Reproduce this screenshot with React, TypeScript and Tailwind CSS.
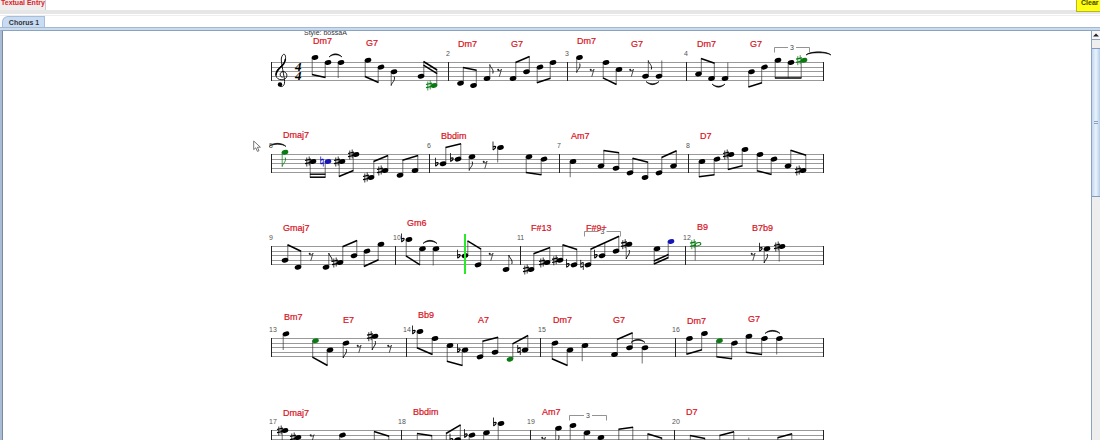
type Accidental = "sharp" | "flat" | "natural";
type Note = [x: number, y: number, accidental?: Accidental | null, color?: string];

interface Group {
  notes: Note[];
  dir: "up" | "down";
  // Height of the stem ends at the first and the last note.
  ends: [number, number];
  kind?: "beam" | "double" | "flag" | "half";
}

interface System {
  bars: number[];
  numbers: [number, number][];
  chords: [number, number, string][];
  groups: Group[];
  rests: [number, number][];
  // x1, y1, x2, y2, bulge
  ties: [number, number, number, number, number][];
  brackets: [number, number][];
  playhead?: number;
}

const GREEN = "#0a7a12";
const BLUE = "#1414b8";
const LINES = [0, 5, 9, 14, 18];

const beam = (dir: "up" | "down", a: number, b: number, ...notes: Note[]): Group => ({ notes, dir, ends: [a, b], kind: "beam" });
const pair16 = (dir: "up" | "down", a: number, b: number, ...notes: Note[]): Group => ({ notes, dir, ends: [a, b], kind: "double" });
const flag = (dir: "up" | "down", end: number, note: Note): Group => ({ notes: [note], dir, ends: [end, end], kind: "flag" });
const quarter = (dir: "up" | "down", end: number, note: Note): Group => ({ notes: [note], dir, ends: [end, end] });

const systems: System[] = [
  {
    bars: [448.5, 567.5, 686.5],
    numbers: [[446, 2], [565, 3], [684, 4]],
    chords: [[313, -18, "Dm7"], [366, -16, "G7"], [458, -15, "Dm7"], [511, -15, "G7"], [577, -18, "Dm7"], [631, -15, "G7"], [697, -15, "Dm7"], [750, -15, "G7"]],
    groups: [
      beam("down", 12, 15, [315, -5], [328, 0]),
      quarter("down", 15.5, [341, 0]),
      beam("down", 14, 20, [368, -2.3], [381, 4.6]),
      flag("down", 23, [394, 9.2]),
      pair16("up", -1, 7.5, [421, 13.8], [434, 23, "sharp", GREEN]),
      beam("up", 5, 7.7, [460.5, 20.7], [473.5, 23]),
      flag("up", 2, [487, 16]),
      beam("up", 0, -6, [513, 16], [526.5, 9.2]),
      beam("down", 20.3, 15.7, [540, 4.6], [553, 0]),
      flag("down", 10, [579.5, -5]),
      beam("down", 15.3, 22, [606, 0], [619, 7]),
      flag("up", -2, [645.5, 13.8]),
      quarter("up", -2, [659, 13.8]),
      beam("up", -4, 0.7, [698.5, 11.5], [711.5, 16]),
      quarter("up", 0, [725, 16]),
      beam("down", 24.5, 20.3, [751.5, 9.2], [764.5, 4.6]),
      beam("down", 15.5, 15.5, [778, -2.3], [791, 0], [804, -2.3, "sharp", GREEN]),
    ],
    rests: [[499.5, 9.5], [592, 9.5], [631.5, 9.5]],
    ties: [[329, -5.5, 342, -5.5, -3], [646, 19, 659, 19, 3], [712, 21.5, 725, 21.5, 3], [806, -7.5, 831, -7.5, -3]],
    brackets: [[774.5, 809.5]],
  },
  {
    bars: [429.5, 559.5, 688.5],
    numbers: [[269, 5], [427, 6], [557, 7], [686, 8]],
    chords: [[283, -16, "Dmaj7"], [441, -15, "Bbdim"], [571, -15, "Am7"], [700, -15, "D7"]],
    groups: [
      flag("down", 12, [285, -2.3, null, GREEN]),
      pair16("down", 22.7, 22.7, [313, 7, "sharp"], [328, 7, "natural", BLUE]),
      beam("down", 22, 16, [342, 7, "sharp"], [356, 0, "sharp"]),
      beam("up", 7, 1, [371, 23, "sharp"], [385, 16, "sharp"]),
      beam("up", 5.7, 1, [400, 20.7], [415, 16]),
      beam("up", -7, -10.7, [443, 9.2, "flat"], [458, 4.6, "flat"]),
      flag("down", 16, [472, 2.3]),
      quarter("down", 8, [500.5, -7, "flat"]),
      beam("down", 18, 20.3, [529, 2.3], [544, 4.6]),
      quarter("down", 22.7, [573, 7]),
      beam("up", -4, -1.7, [601, 11.5], [616, 13.8]),
      beam("up", 3.7, 7.7, [630, 18.4], [645, 23]),
      beam("up", 3, -3.7, [659, 18.4], [673.5, 11.5]),
      beam("down", 22.3, 20.3, [702, 7], [717, 4.6]),
      beam("down", 15, 11.3, [731, 0, "sharp"], [745, -5]),
      beam("down", 16.3, 20, [760, 0], [774, 4.6]),
      beam("up", -4.3, 0.7, [788, 11.5], [803, 16, "sharp"]),
    ],
    rests: [[485, 9.5]],
    ties: [[269, -8, 286, -8, -3]],
    brackets: [],
  },
  {
    bars: [395.5, 520.5, 685.5],
    numbers: [[269, 9], [393, 10], [517, 11], [683, 12]],
    chords: [[283, -15, "Gmaj7"], [407, -20, "Gm6"], [531, -15, "F#13"], [586, -15, "F#9+"], [697, -16, "B9"], [752, -15, "B7b9"]],
    groups: [
      beam("up", -1.7, 4.7, [285, 13.8], [298, 20.7]),
      flag("up", 6.5, [326, 20.7]),
      beam("up", 0.3, -6, [340, 16, "sharp"], [354, 9.2]),
      beam("down", 20, 13.3, [367, 4.6], [381, -2.3]),
      beam("down", 9.3, 18.3, [409, -7, "flat"], [422.5, 2.3]),
      quarter("down", 19, [436, 2.3]),
      beam("up", -5.7, 2.7, [465, 9.2, "flat"], [478, 18.4]),
      flag("up", 8.5, [506, 23]),
      beam("up", 7.3, 1, [531, 23, "sharp"], [547, 16, "sharp"]),
      beam("up", -1.7, 3, [560, 13.8, "sharp"], [574, 18.4, "flat"]),
      beam("up", 2.7, -10.3, [588, 18.4, "natural"], [602, 9.2, "flat"], [616, 4.6]),
      flag("down", 12.5, [629, -2.3, "sharp"]),
      pair16("down", 17.5, 11, [657, 2.3], [671, -5, null, BLUE]),
      { notes: [[698, -2.3, "sharp", GREEN]], dir: "down", ends: [14, 14], kind: "half" },
      flag("down", 16.5, [767, 2.3, "flat"]),
      quarter("down", 15, [782, 0, "sharp"]),
    ],
    rests: [[311, 9.5], [491, 9.5], [753, 9.5]],
    ties: [[423, -3, 437, -3, -3]],
    brackets: [[584.5, 620.5]],
    playhead: 465,
  },
  {
    bars: [406.5, 540.5, 675.5],
    numbers: [[269, 13], [403, 14], [538, 15], [672, 16]],
    chords: [[284, -18, "Bm7"], [343, -15, "E7"], [418, -20, "Bb9"], [478, -15, "A7"], [553, -15, "Dm7"], [613, -15, "G7"], [687, -14, "Dm7"], [748, -16, "G7"]],
    groups: [
      quarter("down", 11.5, [286, -4.6]),
      beam("down", 18.7, 27, [315.5, 2.3, null, GREEN], [330, 11.5]),
      flag("down", 19.5, [346, 4.6]),
      flag("down", 11.5, [375, -2.3, "sharp"]),
      beam("down", 9.3, 16, [420, -7, "flat"], [435, 0]),
      beam("down", 22.7, 27, [450, 7], [465, 11.5, "flat"]),
      beam("up", 2.7, -1.3, [480, 18.4], [495, 13.8]),
      beam("up", 5.3, -3, [510, 20.7, null, GREEN], [525, 11.5, "natural"]),
      beam("down", 20.3, 27, [555, 4.6], [570, 11.5]),
      quarter("down", 22.7, [585, 7]),
      beam("up", 1, -5.7, [614.5, 16], [629.5, 9.2]),
      quarter("down", 25, [645, 9.2]),
      beam("down", 15.7, 11.3, [689.5, 0], [704.5, -5]),
      beam("down", 18.3, 20.3, [719.5, 2.3, null, GREEN], [734.5, 4.6]),
      beam("down", 13.7, 16, [749, -2.3], [764.5, 0]),
      quarter("down", 16, [779.5, 0]),
    ],
    rests: [[359, 9.5], [389.5, 9.5]],
    ties: [[631, 4, 645, 4, -3], [765, -5, 780, -5, -3]],
    brackets: [],
  },
  {
    bars: [401.5, 530.5, 674.5],
    numbers: [[269, 17], [398, 18], [527, 19], [672, 20]],
    chords: [[283, -14, "Dmaj7"], [413, -15, "Bbdim"], [542, -15, "Am7"], [686, -15, "D7"]],
    groups: [
      beam("down", 16, 22, [285, 0, "sharp"], [298, 7, "sharp"]),
      quarter("down", 20, [342.5, 4.6]),
      beam("up", 1, 5.7, [371.5, 18.4], [386, 20.7]),
      beam("up", 3, 5.3, [414.5, 18.4], [429, 20.7]),
      beam("up", 3, -5.7, [443.5, 16], [457.5, 9.2, "flat"]),
      beam("down", 20, 18, [472, 4.6, "flat"], [486.5, 2.3]),
      quarter("down", 15, [501, -7, "flat"]),
      flag("down", 14, [558.5, -2.3]),
      beam("down", 18, 22, [573, -5], [587, 2.3], [601, 7]),
      beam("up", -1.3, -3.3, [616, 18.4], [630, 16]),
      beam("up", 3.3, 7.7, [645, 18.4], [659, 20.7]),
      beam("up", 5, 8, [687.5, 18.4], [702, 20.7]),
      beam("up", 5, 1.3, [717, 18.4], [731, 16]),
      quarter("up", 7, [746, 20.7]),
      beam("up", 7.3, 3.3, [775, 20.7], [789, 18.4]),
    ],
    rests: [[312, 7], [543.5, 9.5]],
    ties: [],
    brackets: [[569.5, 606.5]],
  },
];

function AccidentalMark({ kind, x, y, color }: { kind: Accidental; x: number; y: number; color: string }) {
  const d = {
    sharp: "M-1.2 -4V5M1.2 -5V4",
    flat: "M-1.5 -6V2.4",
    natural: "M-1.3 -5V2.5M1.3 -2.5V5",
  }[kind];
  const heavy = {
    sharp: "M-3 -1L3 -2.4M-3 2.2L3 .8",
    flat: "M-1.5 -.6C1.5 -2.4 2.6 .2 -1.5 2.4",
    natural: "M-1.3 -1.4L1.3 -2.4M-1.3 2.4L1.3 1.4",
  }[kind];
  return (
    <g transform={`translate(${x} ${y})`} stroke={color} fill="none">
      <path d={d} strokeWidth={0.8} />
      <path d={heavy} strokeWidth={1.2} />
    </g>
  );
}

function NoteGroup({ group }: { group: Group }) {
  const { notes, dir, ends, kind } = group;
  const side = dir === "up" ? 2.8 : -2.8;
  const first = notes[0][0] + side;
  const last = notes[notes.length - 1][0] + side;
  const inward = dir === "up" ? 3.6 : -3;
  const endAt = (x: number) => (last === first ? ends[0] : ends[0] + ((x - first) / (last - first)) * (ends[1] - ends[0]));
  const f = dir === "up" ? 1 : -1;
  return (
    <g>
      {notes.map(([x, y, accidental, color = "#000"]) => (
        <g key={x}>
          <path d={`M${x + side} ${y}V${endAt(x + side)}`} stroke={color === GREEN && kind === "flag" ? GREEN : "#333"} strokeWidth={0.7} />
          <ellipse
            cx={x}
            cy={y}
            rx={kind === "half" ? 2.9 : 3.4}
            ry={kind === "half" ? 1.5 : 2.3}
            fill={kind === "half" ? "#fff" : color}
            stroke={kind === "half" ? color : "none"}
            transform={`rotate(-18 ${x} ${y})`}
          />
          {accidental && <AccidentalMark kind={accidental} x={x - (accidental === "sharp" ? 5 : 6)} y={y} color={color} />}
          {kind === "flag" && (
            <path
              d={`M${x + side} ${ends[0]}c.3 ${3 * f} 4.4 ${4.5 * f} 3 ${9 * f}`}
              stroke={color}
              strokeWidth={0.9}
              fill="none"
            />
          )}
        </g>
      ))}
      {(kind === "beam" || kind === "double") && (
        <path d={`M${first - 0.3} ${ends[0]}L${last + 0.3} ${ends[1]}`} stroke="#000" strokeWidth={1.5} />
      )}
      {kind === "double" && (
        <path d={`M${first - 0.3} ${ends[0] + inward}L${last + 0.3} ${ends[1] + inward}`} stroke="#000" strokeWidth={1.4} />
      )}
    </g>
  );
}

function Clef() {
  return (
    <g fill="none" stroke="#000">
      <path
        d="M282.6 15.3C279 14.6 279.6 9.6 283 9.6C288.3 9.8 288.3 17.6 282 17.8C275 17.8 274.3 11 278.3 6.6C282 3 285.8 .2 285.6 -4.4C285.4 -9.4 282.4 -8.4 281.4 -4C280.6 0 284.6 15 284.6 19.6C284.8 25.6 279.4 25.6 278.6 22.8"
        strokeWidth={0.9}
      />
      <path d="M276 13.5C276 10 278 7.6 280.6 5.2C283.2 3 285.2 .4 285.4 -3" strokeWidth={1.5} />
      <circle cx={280} cy={22.4} r={2.2} fill="#000" stroke="none" />
    </g>
  );
}

function Staff({ system, first }: { system: System; first: boolean }) {
  return (
    <svg className="block h-[92px] w-[1087px] shrink-0 overflow-visible font-['Liberation_Sans',Arial,sans-serif]" viewBox="4 -31 1087 92">
      {LINES.map((y) => (
        <path key={y} d={`M271 ${y + 0.5}H824`} stroke="#999" />
      ))}
      {[271.5, ...system.bars, 823.5].map((x) => (
        <path key={x} d={`M${x} 0V19`} stroke="#222" />
      ))}
      {first && (
        <>
          <text x={304} y={-27} className="fill-[#333] text-[7px]">Style: bossaA</text>
          <Clef />
          <g className="fill-black font-['Liberation_Serif',serif] text-[13px] font-bold italic">
            <text x={295} y={9}>4</text>
            <text x={295} y={18}>4</text>
          </g>
        </>
      )}
      <g transform="translate(0 .5)">
        {system.groups.map((group) => (
          <NoteGroup key={group.notes[0][0]} group={group} />
        ))}
        {system.rests.map(([x, y]) => (
          <g key={x} stroke="#222" fill="none">
            <circle cx={x - 1.3} cy={y - 2.2} r={1} fill="#222" stroke="none" />
            <path d={`M${x - 1.6} ${y - 1.6}C${x} ${y - 0.8} ${x + 1.4} ${y - 1.4} ${x + 2} ${y - 2.8}L${x - 0.2} ${y + 4.6}`} strokeWidth={0.8} />
          </g>
        ))}
        {system.ties.map(([x1, y1, x2, y2, b]) => (
          <path
            key={x1}
            d={`M${x1} ${y1}C${x1 + 4} ${y1 + b} ${x2 - 4} ${y2 + b} ${x2} ${y2}C${x2 - 4} ${y2 + b * 1.4} ${x1 + 4} ${y1 + b * 1.4} ${x1} ${y1}Z`}
            fill="#000"
            stroke="#000"
            strokeWidth={0.6}
          />
        ))}
      </g>
      {system.brackets.map(([a, b]) => (
        <g key={a}>
          <path
            d={`M${a} -9.5V-14.5H${(a + b) / 2 - 4}M${(a + b) / 2 + 4} -14.5H${b}V-9.5`}
            stroke="#777"
            strokeWidth={0.8}
            fill="none"
          />
          <text x={(a + b) / 2 - 2} y={-12} className="fill-[#444] text-[7px]">3</text>
        </g>
      ))}
      {system.numbers.map(([x, n]) => (
        <text key={n} x={x} y={-6} className="fill-[#555] text-[7px]">{n}</text>
      ))}
      {system.chords.map(([x, y, name]) => (
        <text key={x} x={x} y={y} className="fill-[#d8101c] stroke-[#d8101c] stroke-[0.2px] text-[9px]">{name}</text>
      ))}
      {system.playhead && <path d={`M${system.playhead} -12V28`} stroke="#2be82b" strokeWidth={2} />}
    </svg>
  );
}

export default function App() {
  return (
    <div className="flex h-screen flex-col overflow-hidden bg-white font-['Liberation_Sans',Arial,sans-serif] text-[7px] font-bold">
      <header className="flex h-[10px] shrink-0">
        <label htmlFor="entry" className="flex w-[46px] shrink-0 items-start border-r border-[#ccc] bg-[#eee] pl-px leading-[5px] whitespace-nowrap text-[#dc1c28]">
          Textual Entry
        </label>
        <input id="entry" className="min-w-0 flex-1 bg-white outline-none" />
        <button className="relative z-10 flex h-3 w-6 shrink-0 items-start border-b border-l border-[#b5b52c] bg-[#ffff14] pl-1 leading-[5px] text-[#444400]">
          Clear
        </button>
      </header>
      <div className="h-1 shrink-0 bg-[#e6e6e6]" />
      <div className="h-px shrink-0" />
      <nav role="tablist" className="flex h-[12px] shrink-0 border-t border-[#eee] pl-[2px]">
        <button role="tab" aria-selected="true" className="h-3 w-[43px] rounded-tl-md border border-b-0 border-[#a9bdd6] bg-[#c8dcf4] pl-px leading-[11px] text-[#333]">
          Chorus 1
        </button>
      </nav>
      <div className="h-[3px] shrink-0 border-t border-[#a5b8cf] bg-[#c8dcf0]" />
      <main className="flex min-h-0 flex-1 border-t border-l-2 border-t-[#8ba3c1] border-l-[#a9bdd6]">
        <section className="relative min-w-0 flex-1 overflow-hidden border-l border-[#7a8a99] pl-px font-normal">
          {systems.map((system, i) => (
            <Staff key={i} system={system} first={i === 0} />
          ))}
          <svg className="absolute top-[109px] left-[250px] h-[13px] w-[9px]" viewBox="0 0 9 13">
            <path d="M.7 1V9.6L2.8 7.8L4.4 11.4L6 10.7L4.4 7.2H7.4Z" fill="#fff" stroke="#555" strokeWidth={0.8} />
          </svg>
        </section>
        <aside className="flex w-[9px] shrink-0 flex-col border-l border-[#8ba3c1] bg-[#eee]">
          <button aria-label="Scroll up" className="flex h-[9px] items-center justify-center border-b border-[#8ba3c1] bg-[#f6f6f6]">
            <svg className="h-1 w-1.5" viewBox="0 0 6 4">
              <path d="M0 3.5L3 .5L6 3.5Z" fill="#222" />
            </svg>
          </button>
          <div className="h-2 shrink-0" />
          <div className="flex h-[149px] shrink-0 items-center justify-center border-y border-[#7f9cc0] bg-linear-to-r from-[#c3d7ee] via-[#eaf3fc] to-[#b4cdeb]">
            <div className="h-[3px] w-1 border-y border-[#8ba3c1]" />
          </div>
        </aside>
      </main>
    </div>
  );
}
